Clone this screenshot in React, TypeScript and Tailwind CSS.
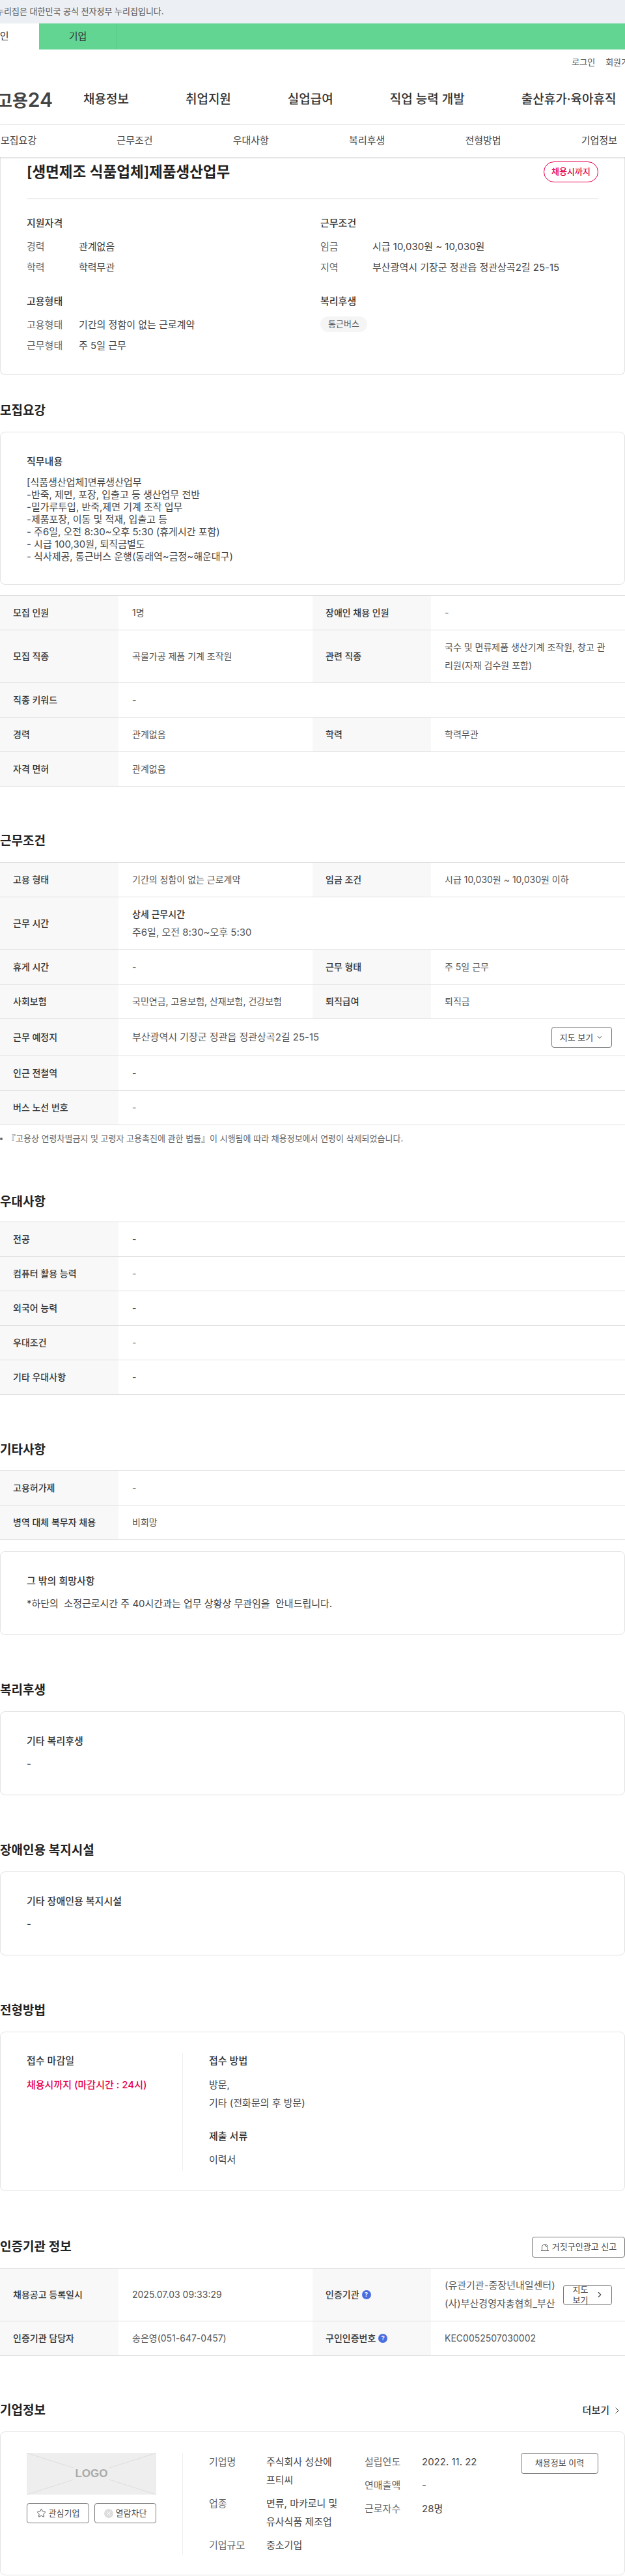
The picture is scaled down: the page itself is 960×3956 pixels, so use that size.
import type { ReactNode } from "react";
import { ChevronDown, ChevronRight, Star, X } from "lucide-react";

type Cell = { label: ReactNode; value: ReactNode };

function Label({ children }: { children: ReactNode }) {
  return (
    <div className="w-[182px] shrink-0 self-stretch flex items-center bg-[#f8f8f8] pl-5 text-sm font-medium text-[#333]">
      {children}
    </div>
  );
}

function Row({ cells, h = "h-[53px]" }: { cells: Cell[]; h?: string }) {
  return (
    <div className={`flex border-b border-[#e0e0e0] ${h}`}>
      {cells.map((c, i) => (
        <div key={i} className={cells.length === 1 ? "flex flex-1 min-w-0" : "flex w-[480px] min-w-0"}>
          <Label>{c.label}</Label>
          <div className="flex-1 min-w-0 flex items-center px-[21px] text-sm text-[#555]">{c.value}</div>
        </div>
      ))}
    </div>
  );
}

function Heading({ children, right, className }: { children: ReactNode; right?: ReactNode; className: string }) {
  return (
    <div className={`flex h-[30px] items-center justify-between ${className}`}>
      <h2 className="text-[19px] font-semibold text-[#222]">{children}</h2>
      {right}
    </div>
  );
}

function Card({ children, className }: { children: ReactNode; className?: string }) {
  return <div className={`rounded-lg border border-[#e2e2e2] px-10 ${className}`}>{children}</div>;
}

function SubTitle({ children, className }: { children: ReactNode; className?: string }) {
  return <h3 className={`h-6 leading-6 font-medium text-[#333] ${className}`}>{children}</h3>;
}

function TextCard({ title, className, children }: { title: string; className?: string; children: ReactNode }) {
  return (
    <Card className={`pt-[33px] pb-[35px] ${className}`}>
      <SubTitle>{title}</SubTitle>
      <div className="mt-[11px] leading-6 text-[#444]">{children}</div>
    </Card>
  );
}

function Info({ label, value }: { label: string; value: ReactNode }) {
  return (
    <div className="flex h-8 items-center">
      <span className="w-20 text-[#666]">{label}</span>
      <span className="text-[#444]">{value}</span>
    </div>
  );
}

function CompanyRow({ label, value }: { label: string; value: ReactNode }) {
  return (
    <div className="flex leading-7">
      <span className="w-[88px] shrink-0 text-[#666]">{label}</span>
      <span className="w-[122px] break-keep text-[#444]">{value}</span>
    </div>
  );
}

function Help() {
  return (
    <span className="ml-1 inline-flex size-[14px] items-center justify-center rounded-full bg-[#4a6ee0] text-[9px] font-bold text-white">
      ?
    </span>
  );
}

const jobText = [
  "[식품생산업체]면류생산업무",
  "-반죽, 제면, 포장, 입출고 등 생산업무 전반",
  "-밀가루투입, 반죽,제면 기계 조작 업무",
  "-제품포장, 이동 및 적재, 입출고 등",
  "- 주6일, 오전 8:30~오후 5:30 (휴게시간 포함)",
  "- 시급 100,30원, 퇴직금별도",
  "- 식사제공, 통근버스 운행(동래역~금정~해운대구)",
];

export default function App() {
  return (
    <div className="w-[960px] h-[3956px] overflow-hidden bg-white text-[15px] font-['Inter','Noto_Sans_CJK_KR',sans-serif]">
      <div className="h-9 flex items-center bg-[#eceff4] text-[13px] text-[#555]">
        <span className="-ml-[6px]">누리집은 대한민국 공식 전자정부 누리집입니다.</span>
      </div>
      <div className="h-10 flex bg-[#62d592] text-[#333]">
        <div className="w-[60px] flex items-center overflow-hidden bg-white">
          <span className="-ml-[14px] shrink-0">개인</span>
        </div>
        <div className="w-[120px] flex items-center justify-center border-r border-[#58c486]">기업</div>
      </div>
      <div className="h-10 flex items-center justify-end gap-4 -mr-[18px] text-[13px] text-[#555]">
        <span>로그인</span>
        <span>회원가입</span>
      </div>
      <div className="h-[76px] flex items-center border-b border-[#eeeeee] text-[19px] font-medium text-[#333]">
        <span className="w-[133px] shrink-0 -ml-[5px] text-[26px] font-semibold text-[#444]">
          고용<span className="text-[30px]">24</span>
        </span>
        <nav className="flex gap-[87px] whitespace-nowrap">
          <span>채용정보</span>
          <span>취업지원</span>
          <span>실업급여</span>
          <span>직업 능력 개발</span>
          <span>출산휴가·육아휴직</span>
        </nav>
      </div>
      <div className="relative z-10 h-[49px] flex items-center justify-between pl-px pr-3 bg-white text-[#444] shadow-[0_1px_3px_rgba(0,0,0,0.2)]">
        <span>모집요강</span>
        <span>근무조건</span>
        <span>우대사항</span>
        <span>복리후생</span>
        <span>전형방법</span>
        <span>기업정보</span>
      </div>

      <div className="h-[335px] rounded-b-lg border-x border-b border-[#e2e2e2] px-10">
        <div className="flex items-center justify-between border-b-2 border-[#eeeeee] pt-[6px] pb-[23px]">
          <h1 className="text-[22.5px] font-semibold text-[#222]">[생면제조 식품업체]제품생산업무</h1>
          <span className="h-8 w-[84px] flex items-center justify-center rounded-full border border-[#e6004d] text-[13px] font-medium text-[#e6004d]">
            채용시까지
          </span>
        </div>
        <div className="grid grid-cols-[451px_1fr] gap-y-6 pt-[25px]">
          <div>
            <SubTitle className="mb-2">지원자격</SubTitle>
            <Info label="경력" value="관계없음" />
            <Info label="학력" value="학력무관" />
          </div>
          <div>
            <SubTitle className="mb-2">근무조건</SubTitle>
            <Info label="임금" value="시급 10,030원 ~ 10,030원" />
            <Info label="지역" value="부산광역시 기장군 정관읍 정관상곡2길 25-15" />
          </div>
          <div>
            <SubTitle className="mb-2">고용형태</SubTitle>
            <Info label="고용형태" value="기간의 정함이 없는 근로계약" />
            <Info label="근무형태" value="주 5일 근무" />
          </div>
          <div>
            <SubTitle className="mb-2">복리후생</SubTitle>
            <span className="mt-[3px] inline-flex h-6 items-center rounded-full bg-[#f5f5f5] px-3 text-[13px] text-[#555]">
              통근버스
            </span>
          </div>
        </div>
      </div>

      <Heading className="mt-10">모집요강</Heading>
      <Card className="mt-[17px] h-[235px] pt-[33px]">
        <SubTitle>직무내용</SubTitle>
        <div className="mt-[10px] leading-[19px] text-[#444]">
          {jobText.map((l) => (
            <div key={l}>{l}</div>
          ))}
        </div>
      </Card>
      <div className="mt-4 border-t border-[#e0e0e0]">
        <Row
          cells={[
            { label: "모집 인원", value: "1명" },
            { label: "장애인 채용 인원", value: "-" },
          ]}
        />
        <Row
          h="h-[81px]"
          cells={[
            { label: "모집 직종", value: "곡물가공 제품 기계 조작원" },
            {
              label: "관련 직종",
              value: <span className="leading-7">국수 및 면류제품 생산기계 조작원, 창고 관리원(자재 검수원 포함)</span>,
            },
          ]}
        />
        <Row cells={[{ label: "직종 키워드", value: "-" }]} />
        <Row
          cells={[
            { label: "경력", value: "관계없음" },
            { label: "학력", value: "학력무관" },
          ]}
        />
        <Row cells={[{ label: "자격 면허", value: "관계없음" }]} />
      </div>

      <Heading className="mt-[69px]">근무조건</Heading>
      <div className="mt-[17px] border-t border-[#e0e0e0]">
        <Row
          cells={[
            { label: "고용 형태", value: "기간의 정함이 없는 근로계약" },
            { label: "임금 조건", value: "시급 10,030원 ~ 10,030원 이하" },
          ]}
        />
        <Row
          h="h-[81px]"
          cells={[
            {
              label: "근무 시간",
              value: (
                <div className="leading-7">
                  <div className="font-medium text-[#333]">상세 근무시간</div>
                  <div className="text-[15px]">주6일, 오전 8:30~오후 5:30</div>
                </div>
              ),
            },
          ]}
        />
        <Row
          cells={[
            { label: "휴게 시간", value: "-" },
            { label: "근무 형태", value: "주 5일 근무" },
          ]}
        />
        <Row
          cells={[
            { label: "사회보험", value: "국민연금, 고용보험, 산재보험, 건강보험" },
            { label: "퇴직급여", value: "퇴직금" },
          ]}
        />
        <Row
          h="h-[57px]"
          cells={[
            {
              label: "근무 예정지",
              value: (
                <div className="flex w-full items-center justify-between">
                  <span className="text-[15px]">부산광역시 기장군 정관읍 정관상곡2길 25-15</span>
                  <button className="-mr-[1px] h-8 w-[93px] flex items-center justify-center gap-1 rounded border border-[#777] text-[13px] text-[#444]">
                    지도 보기 <ChevronDown size={12} />
                  </button>
                </div>
              ),
            },
          ]}
        />
        <Row cells={[{ label: "인근 전철역", value: "-" }]} />
        <Row cells={[{ label: "버스 노선 번호", value: "-" }]} />
      </div>
      <p className="mt-[10px] h-5 leading-5 text-[13px] text-[#666]">
        <span className="mr-[7px] inline-block size-1 rounded-full bg-[#666] align-middle" />
        『고용상 연령차별금지 및 고령자 고용촉진에 관한 법률』이 시행됨에 따라 채용정보에서 연령이 삭제되었습니다.
      </p>

      <Heading className="mt-[73px]">우대사항</Heading>
      <div className="mt-[15px] border-t border-[#e0e0e0]">
        <Row cells={[{ label: "전공", value: "-" }]} />
        <Row cells={[{ label: "컴퓨터 활용 능력", value: "-" }]} />
        <Row cells={[{ label: "외국어 능력", value: "-" }]} />
        <Row cells={[{ label: "우대조건", value: "-" }]} />
        <Row cells={[{ label: "기타 우대사항", value: "-" }]} />
      </div>

      <Heading className="mt-[70px]">기타사항</Heading>
      <div className="mt-4 border-t border-[#e0e0e0]">
        <Row cells={[{ label: "고용허가제", value: "-" }]} />
        <Row cells={[{ label: "병역 대체 복무자 채용", value: "비희망" }]} />
      </div>
      <TextCard title="그 밖의 희망사항" className="mt-[17px]">
        *하단의 &nbsp;소정근로시간 주 40시간과는 업무 상황상 무관임을 &nbsp;안내드립니다.
      </TextCard>

      <Heading className="mt-[70px]">복리후생</Heading>
      <TextCard title="기타 복리후생" className="mt-[17px]">
        -
      </TextCard>

      <Heading className="mt-[70px]">장애인용 복지시설</Heading>
      <TextCard title="기타 장애인용 복지시설" className="mt-[17px]">
        -
      </TextCard>

      <Heading className="mt-[70px]">전형방법</Heading>
      <Card className="mt-[17px] flex h-[245px] pt-[32px]">
        <div className="h-[180px] w-[240px] border-r border-[#eeeeee]">
          <SubTitle>접수 마감일</SubTitle>
          <div className="mt-[11px] leading-7 font-medium text-[#e6004d]">채용시까지 (마감시간 : 24시)</div>
        </div>
        <div className="pl-10">
          <SubTitle>접수 방법</SubTitle>
          <div className="mt-[11px] leading-7 text-[#444]">
            <div>방문,</div>
            <div>기타 (전화문의 후 방문)</div>
          </div>
          <SubTitle className="mt-[25px]">제출 서류</SubTitle>
          <div className="mt-[10px] leading-7 text-[#444]">이력서</div>
        </div>
      </Card>

      <Heading
        className="mt-[71px]"
        right={
          <button className="h-8 w-[143px] flex items-center justify-center gap-1 rounded border border-[#777] text-[13px] text-[#444]">
            <svg width="14" height="14" viewBox="0 0 14 14" fill="none" stroke="#555" strokeWidth="1">
              <path d="M1 12.5h12M2.5 12.5V7a4.5 4.5 0 0 1 9 0v5.5" />
              <path d="M7 4.5a2.5 2.5 0 0 1 2.5 2.5" />
            </svg>
            거짓구인광고 신고
          </button>
        }
      >
        인증기관 정보
      </Heading>
      <div className="mt-[17px] border-t border-[#e0e0e0]">
        <Row
          h="h-[81px]"
          cells={[
            { label: "채용공고 등록일시", value: "2025.07.03 09:33:29" },
            {
              label: (
                <>
                  인증기관
                  <Help />
                </>
              ),
              value: (
                <div className="flex w-full items-center justify-between text-[15px] leading-7">
                  <span className="w-[172px] shrink-0 whitespace-nowrap">
                    (유관기관-중장년내일센터)
                    <br />
                    (사)부산경영자총협회_부산
                  </span>
                  <button className="-mr-[1px] h-[31px] w-[75px] shrink-0 flex items-center justify-center gap-2 rounded border border-[#777] text-[13px] leading-4 text-[#444]">
                    <span className="w-7">지도 보기</span>
                    <ChevronRight size={14} strokeWidth={2} />
                  </button>
                </div>
              ),
            },
          ]}
        />
        <Row
          cells={[
            { label: "인증기관 담당자", value: "송은영(051-647-0457)" },
            {
              label: (
                <>
                  구인인증번호
                  <Help />
                </>
              ),
              value: "KEC0052507030002",
            },
          ]}
        />
      </div>

      <Heading
        className="mt-[69px]"
        right={
          <span className="mr-1 flex items-center gap-1 font-medium text-[#333]">
            더보기 <ChevronRight size={16} strokeWidth={1.5} />
          </span>
        }
      >
        기업정보
      </Heading>
      <Card className="mt-[17px] flex h-[221px] pt-[32px]">
        <div className="h-[156px] w-[240px] border-r border-[#eeeeee]">
          <div className="relative h-16 w-[199px] bg-[#eeeeee]">
            <svg className="absolute inset-0" width="199" height="64" viewBox="0 0 199 64" stroke="#dddddd" fill="none">
              <path d="M0 0L72 23M199 0L127 23M0 64L72 41M199 64L127 41" />
            </svg>
            <span className="absolute inset-0 flex items-center justify-center text-[17px] font-bold font-['Liberation_Sans',sans-serif] text-[#aaaaaa]">
              LOGO
            </span>
          </div>
          <div className="mt-[13px] flex w-[199px] justify-between">
            <button className="h-[31px] w-[96px] flex items-center justify-center gap-1 rounded border border-[#777] text-[13px] text-[#444]">
              <Star size={15} strokeWidth={1.5} />
              관심기업
            </button>
            <button className="h-[31px] w-[95px] flex items-center justify-center gap-1 rounded border border-[#777] text-[13px] text-[#444]">
              <span className="size-[14px] flex items-center justify-center rounded-full bg-[#dddddd]">
                <X size={10} color="#ffffff" strokeWidth={2} />
              </span>
              열람차단
            </button>
          </div>
        </div>
        <div className="flex flex-1 pl-10">
          <div className="w-[239px] flex flex-col gap-2">
            <CompanyRow label="기업명" value="주식회사 성산에 프티씨" />
            <CompanyRow label="업종" value="면류, 마카로니 및 유사식품 제조업" />
            <CompanyRow label="기업규모" value="중소기업" />
          </div>
          <div className="flex flex-col gap-2">
            <CompanyRow label="설립연도" value="2022. 11. 22" />
            <CompanyRow label="연매출액" value="-" />
            <CompanyRow label="근로자수" value="28명" />
          </div>
          <button className="ml-auto h-8 w-[119px] flex items-center justify-center rounded border border-[#777] text-[13px] text-[#444]">
            채용정보 이력
          </button>
        </div>
      </Card>
    </div>
  );
}
